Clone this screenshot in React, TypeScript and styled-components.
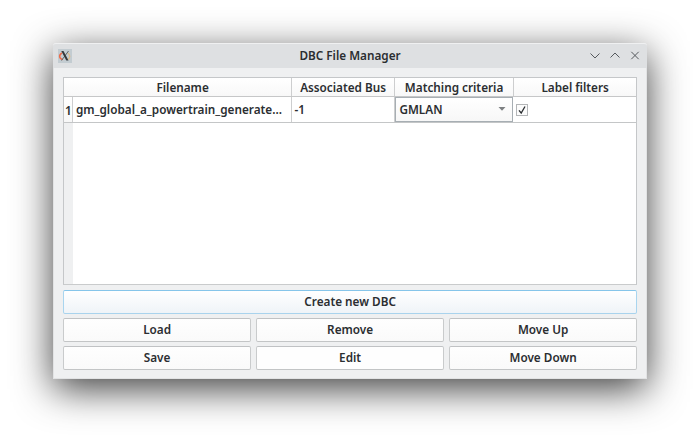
import React from "react";
import styled, { createGlobalStyle, css } from "styled-components";

const GlobalStyle = createGlobalStyle`
  * { box-sizing: border-box; }
  html, body { margin: 0; background: #fff; }
  body { font-family: "Noto Sans", "Open Sans", sans-serif; font-size: 11.75px; font-weight: 600; color: #2b2e31; overflow: hidden; }
`;

const Desktop = styled.main`
  width: 700px;
  height: 442px;
  padding: 43px 53px 0;
  background: #fff;
`;

const Window = styled.section`
  width: 594px;
  height: 336px;
  display: flex;
  flex-direction: column;
  background: #eff0f1;
  border: 1px solid #e2e3e4;
  border-top: 0;
  border-radius: 3px 3px 0 0;
  box-shadow: 0 10px 38px rgba(0, 0, 0, 0.76);
`;

const TitleBar = styled.header`
  height: 25px;
  flex: none;
  margin: 0 -1px;
  padding: 0 6.3px 1px 5px;
  display: grid;
  grid-template-columns: 60px 1fr 60px;
  align-items: center;
  background: #dee0e2;
  border-top: 1px solid #eff0f1;
  border-radius: 3px 3px 0 0;
`;

const Title = styled.h1`
  margin: 0;
  padding: 0 0 2px 1.4px;
  font-size: inherit;
  font-weight: inherit;
  line-height: 16px;
  text-align: center;
`;

const WindowControls = styled.div`
  display: flex;
  gap: 7.7px;
  justify-content: flex-end;
`;

const Content = styled.div`
  flex: 1;
  padding: 9px 9.4px 9px 8.6px;
  display: flex;
  flex-direction: column;
`;

const Table = styled.div`
  height: 208px;
  flex: none;
  display: flex;
  flex-direction: column;
  background: #fff;
  border: 1px solid #c5c7c9;
  border-bottom: 1px solid #c9cbcc;
`;

const HeaderRow = styled.div`
  display: grid;
  grid-template-columns: 228px 103px 119px 1fr;
  height: 19px;
  flex: none;
  background: linear-gradient(#fff, #f8f8f8);
  border-bottom: 1px solid #c6c7c8;
`;

const HeaderCell = styled.div<{ $first?: boolean }>`
  line-height: 18px;
  padding-left: ${(p) => (p.$first ? "11px" : "1px")};
  text-align: center;
  border-right: 1px solid #cdcecf;
  &:last-child { border-right: 0; }
`;

const DataRow = styled.div`
  display: grid;
  grid-template-columns: 9.5px 218.5px 103px 119px 1fr;
  height: 26px;
  flex: none;
  border-bottom: 1px solid #c4c6c7;
`;

const Cell = styled.div`
  min-width: 0;
  height: 25px;
  padding: 0 0 1px 2.8px;
  display: flex;
  align-items: center;
  line-height: 23px;
  white-space: nowrap;
  border-right: 1px solid #cdcecf;
  &:last-child { border-right: 0; }
`;

const RowNumber = styled(Cell)`
  padding: 1px 0 0 1.4px;
  background: linear-gradient(#fff, #f7f7f7);
`;

const Gutter = styled.div`
  flex: 1;
  width: 9.5px;
  background: #eff0f1;
`;

const Select = styled.div`
  height: 25px;
  margin-right: 1px;
  padding: 0 5.4px 1px 3.8px;
  line-height: 22px;
  display: flex;
  align-items: center;
  justify-content: space-between;
  background: linear-gradient(#fff, #f7f7f7);
  border: 1px solid #a7aeb3;
`;

const Checkbox = styled.div`
  width: 12px;
  height: 12px;
  margin-top: 2px;
  display: flex;
  background: #fcfcfc;
  border: 1px solid #b4b6b8;
`;

const buttonTones = {
  normal: css`
    background: linear-gradient(#fefefe, #fafafa);
    border-color: #c0c2c4 #c9cbcc #c3c5c6;
  `,
  hover: css`
    background: linear-gradient(#fff, #eff4f8);
    border-color: #86c5ea #a9d5ef #a9d3ed;
  `,
  plain: css`
    background: #fefefe;
    border-color: #c0c2c4 #c9cbcc #c3c5c6;
  `,
};

const Button = styled.button<{ $tone?: keyof typeof buttonTones }>`
  height: 24px;
  width: 100%;
  padding: 0 0 2px 1px;
  font: inherit;
  line-height: 20px;
  color: inherit;
  border-width: 1px;
  border-style: solid;
  border-radius: 2px;
  ${(p) => buttonTones[p.$tone ?? "normal"]}
`;

const Actions = styled.div`
  margin-top: 5px;
  display: grid;
  gap: 4px;
`;

const ActionGrid = styled.div`
  display: grid;
  grid-template-columns: repeat(3, 1fr);
  column-gap: 5px;
  row-gap: 4px;
`;

function AppIcon() {
  return (
    <svg width="14" height="14" viewBox="0 0 14 14">
      <rect width="14" height="14" fill="#c3ccd1" />
      <path d="M4 4C.5 6 1 9.800 4.800 10.400" fill="none" stroke="#ef6a48" strokeWidth="1.500" />
      <path d="M9.500 3.800C12.700 6 12.300 9 9.500 10.500" fill="none" stroke="#dfbd8d" strokeWidth="1.300" />
      <path d="M10.500 2L3.500 11.500" stroke="#555b60" strokeWidth=".9" />
      <path d="M3.300 2h2.200l5 9.500H8.300z" fill="#34383c" />
    </svg>
  );
}

function ControlIcon({ d }: { d: string }) {
  return (
    <svg width="12" height="12" viewBox="0 0 12 12" fill="none" stroke="#55595d">
      <path d={d} />
    </svg>
  );
}

const controlPaths = ["M1.500 3.500L6 8L10.500 3.500", "M1.500 7.500L6 3L10.500 7.500", "M2.300 1.800L9.700 9.200M9.700 1.800L2.300 9.200"];

const actions: { label: string; tone?: keyof typeof buttonTones }[] = [
  { label: "Load" },
  { label: "Remove" },
  { label: "Move Up" },
  { label: "Save" },
  { label: "Edit", tone: "plain" },
  { label: "Move Down" },
];

export default function App() {
  return (
    <Desktop>
      <GlobalStyle />
      <Window>
        <TitleBar>
          <AppIcon />
          <Title>DBC File Manager</Title>
          <WindowControls>
            {controlPaths.map((d) => <ControlIcon key={d} d={d} />)}
          </WindowControls>
        </TitleBar>
        <Content>
          <Table>
            <HeaderRow>
              <HeaderCell $first>Filename</HeaderCell>
              <HeaderCell>Associated Bus</HeaderCell>
              <HeaderCell>Matching criteria</HeaderCell>
              <HeaderCell>Label filters</HeaderCell>
            </HeaderRow>
            <DataRow>
              <RowNumber>1</RowNumber>
              <Cell>gm_global_a_powertrain_generate...</Cell>
              <Cell>-1</Cell>
              <Select>
                GMLAN
                <svg width="8" height="4" viewBox="0 0 8 4"><path d="M.5 0h7L4 3.700z" fill="#7d8082" /></svg>
              </Select>
              <Cell>
                <Checkbox>
                  <svg width="10" height="10" viewBox="0 0 10 10" fill="none" stroke="#2b2e31" strokeWidth="1.300"><path d="M2 5.300L4.200 8L8 1.500" /></svg>
                </Checkbox>
              </Cell>
            </DataRow>
            <Gutter />
          </Table>
          <Actions>
            <Button $tone="hover">Create new DBC</Button>
            <ActionGrid>
              {actions.map((a) => <Button key={a.label} $tone={a.tone}>{a.label}</Button>)}
            </ActionGrid>
          </Actions>
        </Content>
      </Window>
    </Desktop>
  );
}
